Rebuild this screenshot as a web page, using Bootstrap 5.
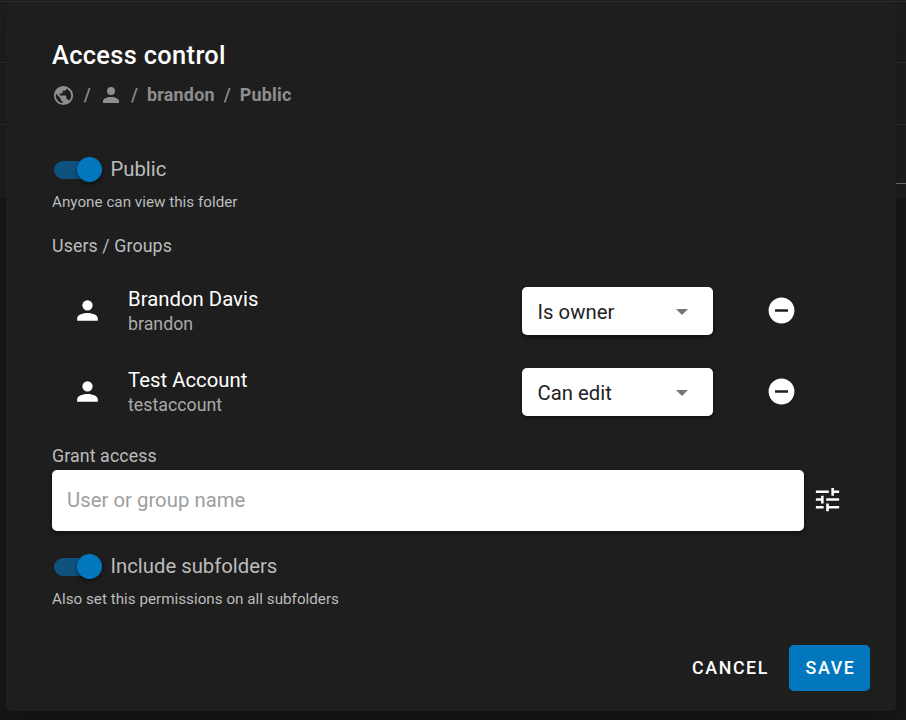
<!DOCTYPE html>
<html lang="en">
<head>
<meta charset="utf-8">
<meta name="viewport" content="width=device-width, initial-scale=1">
<title>Access control</title>
<link href="https://cdn.jsdelivr.net/npm/bootstrap@5.3.0/dist/css/bootstrap.min.css" rel="stylesheet">
<style>
body{background:#171717;font-family:Roboto,"Liberation Sans",sans-serif;color:#fff;height:720px;overflow:hidden}
.backdrop-rows{height:198px;width:100%;background:#1e1e1e}
.backdrop-rows div{border-bottom:1px solid #2e2e2e}
.r0{height:2px}.r1{height:61px}.r2{height:62px}
.backdrop-rows .r3{height:59px;border-color:#6c6c6c;margin-left:450px}
.panel{left:6px;top:2px;width:890px;height:709px;background:#1e1e1e;border-radius:5px;padding:33px 26px 0 46px;box-shadow:0 14px 20px 2px rgba(0,0,0,.2)}
.dlg-title{font-size:25.4px;font-weight:500;line-height:40px;letter-spacing:.34px;margin:0 0 7px}
.crumbs{height:26px;color:#8e8e8e;font-size:17.9px;font-weight:700;line-height:26px;letter-spacing:.25px}
.crumbs .sl,.crumbs .seg{margin-left:8.800px}
.crumbs .sl{font-weight:500}
.crumbs .sl-user{margin-left:8.200px}
.crumb-user{margin-left:7.700px}
.sw-row{height:38px;margin-left:2px}
.sw-first{margin-top:42px}
.sw-second{margin-top:16px}
.track{width:47px;height:18px;border-radius:9px;background:#0f527e;top:.5px}
.thumb{width:25px;height:25px;border-radius:50%;background:#0277bd;right:-1.400px;top:-3.5px;box-shadow:0 3px 5px rgba(0,0,0,.4)}
.sw-label{font-size:20.3px;line-height:38px;color:#bcbcbc;margin-left:9.500px}
.hint{font-size:15.2px;line-height:24px;color:#bcbcbc;margin-top:2px;letter-spacing:.02px}
.sect{font-size:17.8px;line-height:26px;color:#bcbcbc;letter-spacing:.1px}
.sect-users{margin:19px 0 12px}
.sect-grant{margin:10px 0 1px}
.user{height:80px;margin-bottom:1px}
.user-ic{width:76px;padding:0 0 1px 20px}
.uname{font-size:20.3px;line-height:25px;padding-top:1px;letter-spacing:.03px}
.ulogin{font-size:17.8px;line-height:24px;color:#aaa}
.role{width:191px;height:48px;border-radius:5px;background:#fff;color:#222;font-size:20.3px;letter-spacing:.03px;padding:2px 25px 0 15.5px;box-shadow:0 2px 4px rgba(0,0,0,.5)}
.role-col{width:348px}
.caret{color:#757575;margin-bottom:1px}
.remove{margin:0 0 1px 53px}
.grant{width:752px;height:61px;border:0;border-radius:5px;background:#fff;font-size:20.3px;padding:0 15px 2px;letter-spacing:.03px;box-shadow:0 2px 4px rgba(0,0,0,.5);font-family:inherit}
.grant::placeholder{color:#9e9e9e;opacity:1}
.tune{margin:0 0 2px 8px}
.act{height:46px;font-size:17.8px;font-weight:500;letter-spacing:1.6px;border-radius:5px;border:0;color:#fff;padding:0}
.act-save{width:81px;background:#0277bd;padding-left:2px}
.act-cancel{width:118px;padding-left:1px}
.actions{margin-top:34px}
svg{display:block;flex:none;fill:currentColor}
</style>
</head>
<body>
<div class="backdrop-rows"><div class="r0"></div><div class="r1"></div><div class="r2"></div><div class="r3"></div></div>
<svg class="d-none"><symbol id="person" viewBox="0 0 24 24"><path d="M12 4a4 4 0 1 1 0 8 4 4 0 0 1 0-8m0 10c4.420 0 8 1.790 8 4v2H4v-2c0-2.210 3.580-4 8-4z"/></symbol>
<symbol id="minus" viewBox="0 0 24 24"><path d="M17 13H7v-2h10M12 2A10 10 0 0 0 2 12a10 10 0 0 0 10 10 10 10 0 0 0 10-10A10 10 0 0 0 12 2z"/></symbol></svg>
<main class="panel position-absolute d-flex flex-column" role="dialog" aria-labelledby="dlg">
  <h1 class="dlg-title" id="dlg">Access control</h1>
  <div class="crumbs d-flex align-items-center">
    <svg width="23" height="23" viewBox="0 0 24 24"><path d="M17.900 17.390c-.26-.8-1.010-1.390-1.900-1.390h-1v-3a1 1 0 0 0-1-1H8v-2h2a1 1 0 0 0 1-1V7h2a2 2 0 0 0 2-2v-.41c2.930 1.180 5 4.050 5 7.410 0 2.080-.8 3.970-2.100 5.390M11 19.930c-3.950-.49-7-3.850-7-7.930 0-.62.080-1.220.21-1.790L9 15v1a2 2 0 0 0 2 2m1-16A10 10 0 0 0 2 12a10 10 0 0 0 10 10 10 10 0 0 0 10-10A10 10 0 0 0 12 2z"/></svg>
    <span class="sl">/</span>
    <svg class="crumb-user" width="24" height="24"><use href="#person"/></svg>
    <span class="sl sl-user">/</span>
    <span class="seg">brandon</span>
    <span class="sl">/</span>
    <span class="seg">Public</span>
  </div>
  <div class="sw-row sw-first d-flex align-items-center"><div class="track position-relative"><div class="thumb position-absolute"></div></div><span class="sw-label">Public</span></div>
  <div class="hint">Anyone can view this folder</div>
  <div class="sect sect-users">Users / Groups</div>
  <div class="user d-flex align-items-center">
    <div class="user-ic"><svg width="31" height="31"><use href="#person"/></svg></div>
    <div class="flex-grow-1"><div class="uname">Brandon Davis</div><div class="ulogin">brandon</div></div>
    <div class="role-col d-flex align-items-center"><div class="role d-flex align-items-center justify-content-between"><span>Is owner</span><svg class="caret" width="12" height="6" viewBox="0 0 12 6"><path d="M0 0h12L6 6z"/></svg></div><svg class="remove" width="31" height="31"><use href="#minus"/></svg></div>
  </div>
  <div class="user d-flex align-items-center">
    <div class="user-ic"><svg width="31" height="31"><use href="#person"/></svg></div>
    <div class="flex-grow-1"><div class="uname">Test Account</div><div class="ulogin">testaccount</div></div>
    <div class="role-col d-flex align-items-center"><div class="role d-flex align-items-center justify-content-between"><span>Can edit</span><svg class="caret" width="12" height="6" viewBox="0 0 12 6"><path d="M0 0h12L6 6z"/></svg></div><svg class="remove" width="31" height="31"><use href="#minus"/></svg></div>
  </div>
  <div class="sect sect-grant">Grant access</div>
  <div class="d-flex align-items-center"><input class="grant" type="text" placeholder="User or group name" aria-label="User or group name"><svg class="tune" width="31" height="31" viewBox="0 0 24 24"><path d="M3 17v2h6v-2H3M3 5v2h10V5H3m10 16v-2h8v-2h-8v-2h-2v6h2M7 9v2H3v2h4v2h2V9H7m14 4v-2H11v2h10m-6-4h2V7h4V5h-4V3h-2v6z"/></svg></div>
  <div class="sw-row sw-second d-flex align-items-center"><div class="track position-relative"><div class="thumb position-absolute"></div></div><span class="sw-label">Include subfolders</span></div>
  <div class="hint">Also set this permissions on all subfolders</div>
  <div class="actions d-flex justify-content-end"><button class="btn act act-cancel" type="button">CANCEL</button><button class="btn act act-save" type="button">SAVE</button></div>
</main>
<script src="https://cdn.jsdelivr.net/npm/bootstrap@5.3.0/dist/js/bootstrap.bundle.min.js"></script>
</body>
</html>
